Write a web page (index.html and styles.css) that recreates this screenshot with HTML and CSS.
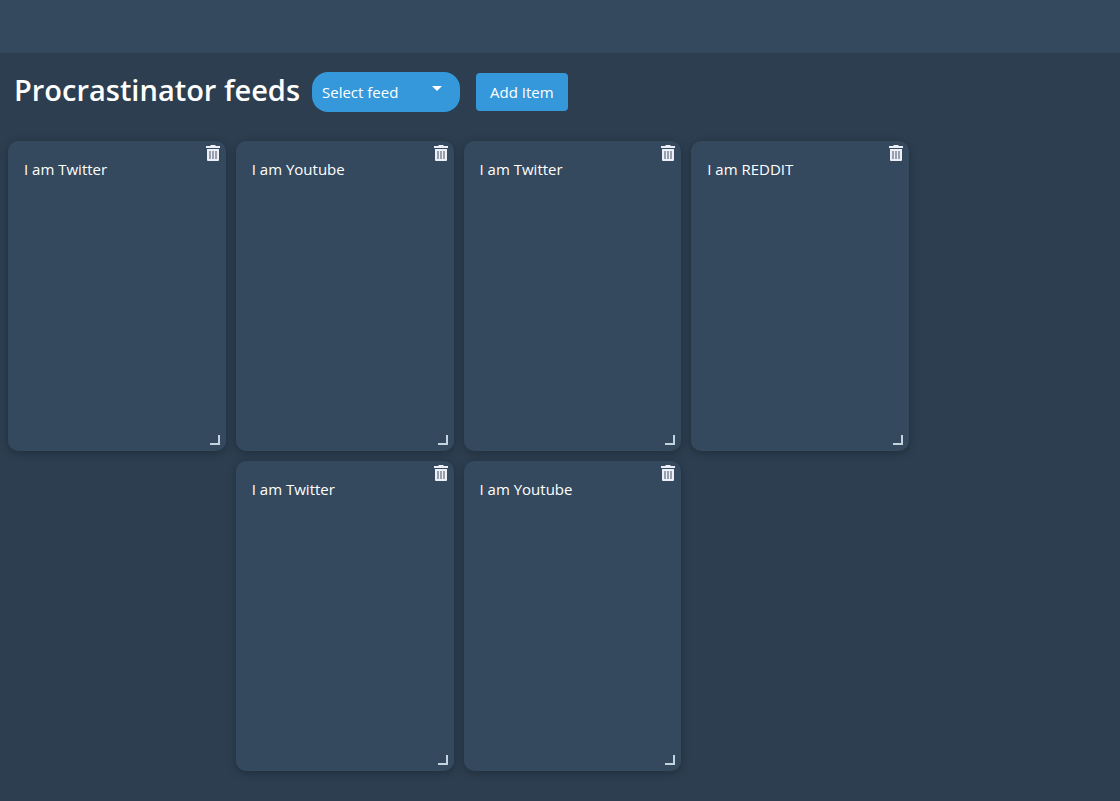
FILE: index.html
```html
<!DOCTYPE html>
<html lang="en">
<head>
<meta charset="utf-8">
<meta name="viewport" content="width=device-width, initial-scale=1">
<title>Procrastinator feeds</title>
<link rel="stylesheet" href="styles.css">
</head>
<body>
<svg class="sprite" aria-hidden="true">
  <symbol id="trash" viewBox="0 0 14 16">
    <path fill="#eceff8" d="M0 1h4l1-1h4l1 1h4v2H0z"/>
    <path fill="#eceff8" d="M1 4h12v11a1 1 0 0 1-1 1H2a1 1 0 0 1-1-1z"/>
    <path fill="#98a0ad" d="M3 6h2v8H3zM6 6h2v8H6zM9 6h2v8H9z"/>
  </symbol>
  <symbol id="corner" viewBox="0 0 10 10">
    <path fill="#c3d3df" d="M8 0h2v10H0V8h8z"/>
  </symbol>
</svg>
<header class="topbar"></header>
<main>
  <div class="toolbar">
    <h1 class="title">Procrastinator feeds</h1>
    <div class="picker">
      <select class="picker-select" aria-label="Select feed">
        <option>Select feed</option>
        <option>Twitter</option>
        <option>Youtube</option>
        <option>Reddit</option>
      </select>
      <svg class="picker-caret" viewBox="0 0 10 5" aria-hidden="true"><path fill="#fff" d="M0 0h10L5 5z"/></svg>
    </div>
    <button class="add" type="button">Add Item</button>
  </div>
  <div class="feeds">
    <section class="card"><p class="card-text">I am Twitter</p><button class="remove" type="button" aria-label="Remove"><svg class="icon"><use href="#trash"/></svg></button><svg class="handle" aria-hidden="true"><use href="#corner"/></svg></section>
    <section class="card"><p class="card-text">I am Youtube</p><button class="remove" type="button" aria-label="Remove"><svg class="icon"><use href="#trash"/></svg></button><svg class="handle" aria-hidden="true"><use href="#corner"/></svg></section>
    <section class="card"><p class="card-text">I am Twitter</p><button class="remove" type="button" aria-label="Remove"><svg class="icon"><use href="#trash"/></svg></button><svg class="handle" aria-hidden="true"><use href="#corner"/></svg></section>
    <section class="card"><p class="card-text">I am REDDIT</p><button class="remove" type="button" aria-label="Remove"><svg class="icon"><use href="#trash"/></svg></button><svg class="handle" aria-hidden="true"><use href="#corner"/></svg></section>
    <section class="card second-column"><p class="card-text">I am Twitter</p><button class="remove" type="button" aria-label="Remove"><svg class="icon"><use href="#trash"/></svg></button><svg class="handle" aria-hidden="true"><use href="#corner"/></svg></section>
    <section class="card"><p class="card-text">I am Youtube</p><button class="remove" type="button" aria-label="Remove"><svg class="icon"><use href="#trash"/></svg></button><svg class="handle" aria-hidden="true"><use href="#corner"/></svg></section>
  </div>
</main>
</body>
</html>
```
FILE: styles.css
```css
* {
  box-sizing: border-box;
}

body {
  margin: 0;
  background: #2c3e50;
  color: #fff;
  font: 15px/24px "Segoe UI", "Open Sans", "Noto Sans", sans-serif;
}

.sprite {
  display: none;
}

.topbar {
  height: 53px;
  background: #34495e;
}

.toolbar {
  display: flex;
  flex-wrap: wrap;
  align-items: center;
  padding: 19px 14px 0;
}

.title {
  margin: 0;
  padding: 0 12px 4px 0;
  font-size: 29px;
  font-weight: 600;
  line-height: 36px;
}

.picker {
  position: relative;
  width: 148px;
  margin-right: 16px;
}

.picker-select {
  display: block;
  width: 100%;
  height: 40px;
  padding: 0 32px 0 10px;
  border: 0;
  border-radius: 16px;
  background: #3498db;
  color: #fff;
  font: inherit;
  appearance: none;
}

.picker-caret {
  position: absolute;
  top: 14px;
  right: 18px;
  width: 10px;
  height: 5px;
  pointer-events: none;
}

.add {
  height: 38px;
  padding: 0 14px;
  border: 0;
  border-radius: 4px;
  background: #3498db;
  color: #fff;
  font: inherit;
}

.feeds {
  display: grid;
  grid-template-columns: repeat(4, minmax(0, 1fr));
  grid-auto-rows: minmax(310px, auto);
  gap: 10px;
  max-width: 917px;
  padding: 29px 8px;
}

.card {
  position: relative;
  padding: 16px;
  border-radius: 10px;
  background: #34495e;
  box-shadow: 0 2px 8px rgba(0, 0, 0, 0.26);
}

.second-column {
  grid-column-start: 2;
}

.card-text {
  margin: 0;
}

.remove {
  position: absolute;
  top: 4px;
  right: 6px;
  padding: 0;
  border: 0;
  background: none;
}

.icon {
  display: block;
  width: 14px;
  height: 16px;
}

.handle {
  position: absolute;
  right: 6px;
  bottom: 6px;
  width: 10px;
  height: 10px;
}
```
